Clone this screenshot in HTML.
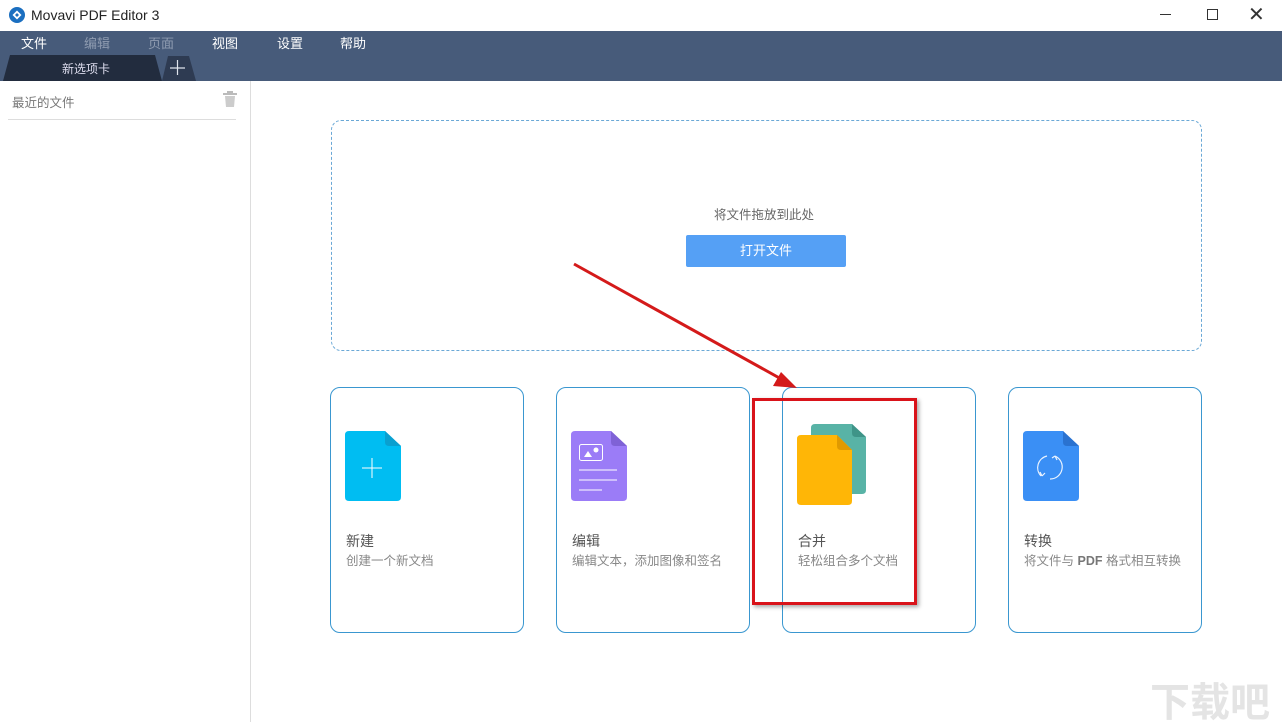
<!DOCTYPE html>
<html><head><meta charset="utf-8"><style>
*{margin:0;padding:0;box-sizing:border-box}
body{width:1282px;height:722px;position:relative;overflow:hidden;background:#fff;font-family:"Liberation Sans","Noto Sans CJK SC",sans-serif;color:#333}
.abs{position:absolute}
.title{top:0;left:0;width:1282px;height:31px;background:#fff;font-size:14px}
.menu{top:31px;left:0;width:1282px;height:50px;background:#475b7a}
.menu span{position:absolute;top:2px;font-size:13px;color:#fff}
.card{position:absolute;top:387px;width:194px;height:246px;border:1px solid #3a97d0;border-radius:10px;background:#fff}
.card .t{position:absolute;left:15px;top:143px;font-size:14px;color:#555}
.card .s{position:absolute;left:15px;top:162px;font-size:12.5px;color:#888;white-space:nowrap}
.card svg{position:absolute;left:14px;top:43px}
</style></head><body>
<div class="abs title">
<svg class="abs" style="left:9px;top:7px" width="16" height="16" viewBox="0 0 16 16"><circle cx="8" cy="8" r="8" fill="#1b6fc0"/><path d="M8 3.5L12.5 8 8 12.5 3.5 8Z" fill="#fff"/><path d="M8 6L10 8 8 10 6 8Z" fill="#1b6fc0"/></svg>
<span class="abs" style="left:31px;top:7px;color:#222">Movavi PDF Editor 3</span>
<span class="abs" style="left:1160px;top:14px;width:11px;height:1px;background:#333"></span>
<span class="abs" style="left:1207px;top:9px;width:11px;height:11px;border:1px solid #333"></span>
<span class="abs" style="left:1248px;top:2px;font-size:20px;color:#333">✕</span>
</div>
<div class="abs menu">
<span style="left:21px">文件</span><span style="left:84px;color:#8e9bb0">编辑</span><span style="left:148px;color:#8e9bb0">页面</span><span style="left:212px">视图</span><span style="left:277px">设置</span><span style="left:340px">帮助</span>
<svg class="abs" style="left:0;top:23px" width="200" height="27"><path d="M3 27L10 1H155L162 27Z" fill="#222c3e"/><path d="M162 27L168 2H189L196 27Z" fill="#2e3b52"/><path d="M170 14H185M177.5 6V21" stroke="#dfe4ec" stroke-width="1.2"/></svg>
<span style="left:62px;top:29px;font-size:12px;color:#dde">新选项卡</span>
</div>
<div class="abs" style="left:0;top:81px;width:251px;height:641px;border-right:1px solid #ddd"></div>
<span class="abs" style="left:12px;top:92px;font-size:12.5px;color:#777">最近的文件</span>
<svg class="abs" style="left:222px;top:91px" width="16" height="16"><rect x="1" y="2" width="14" height="2" fill="#bbb"/><rect x="5" y="0" width="6" height="2" fill="#bbb"/><path d="M3 5H13L12 16H4Z" fill="#ccc"/></svg>
<div class="abs" style="left:8px;top:119px;width:228px;height:1px;background:#ddd"></div>
<div class="abs" style="left:331px;top:120px;width:871px;height:231px;border:1.5px dashed #6aa8d6;border-radius:10px"></div>
<span class="abs" style="left:714px;top:204px;font-size:12.5px;color:#666">将文件拖放到此处</span>
<div class="abs" style="left:686px;top:235px;width:160px;height:32px;background:#55a0f5;border-radius:2px;color:#fff;font-size:13px;text-align:center;line-height:32px">打开文件</div>
<div class="card" style="left:330px"><svg width="58" height="72" viewBox="0 0 58 72"><path d="M4 0H40L56 15V66Q56 70 52 70H4Q0 70 0 66V4Q0 0 4 0Z" fill="#00bdf2"/><path d="M40 0L56 15H44Q40 15 40 11Z" fill="#0aa0d0"/><path d="M17 37H37M27 27V47" stroke="#fff" stroke-width="1"/></svg><div class="t">新建</div><div class="s">创建一个新文档</div></div>
<div class="card" style="left:556px"><svg width="58" height="72" viewBox="0 0 58 72"><path d="M4 0H40L56 15V66Q56 70 52 70H4Q0 70 0 66V4Q0 0 4 0Z" fill="#9b7cf7"/><path d="M40 0L56 15H44Q40 15 40 11Z" fill="#7f62d6"/><rect x="8.5" y="13.5" width="23" height="16" rx="2" fill="none" stroke="#fff"/><path d="M13 26L17 20 21 26Z" fill="#fff"/><circle cx="25" cy="19" r="2.5" fill="#fff"/><path d="M8 39H46M8 49H46M8 59H31" stroke="#fff"/></svg><div class="t">编辑</div><div class="s">编辑文本，添加图像和签名</div></div>
<div class="card" style="left:782px"><svg style="left:14px;top:36px" width="72" height="84" viewBox="0 0 72 84"><path d="M18 0H55L69 13V66Q69 70 65 70H18Q14 70 14 66V4Q14 0 18 0Z" fill="#58b3a6"/><path d="M55 0L69 13H59Q55 13 55 9Z" fill="#3f9488"/><path d="M4 11H40L55 26V77Q55 81 51 81H4Q0 81 0 77V15Q0 11 4 11Z" fill="#ffb606"/><path d="M40 11L55 26H44Q40 26 40 22Z" fill="#e09a00"/></svg><div class="t">合并</div><div class="s">轻松组合多个文档</div></div>
<div class="card" style="left:1008px"><svg width="58" height="72" viewBox="0 0 58 72"><path d="M4 0H40L56 15V66Q56 70 52 70H4Q0 70 0 66V4Q0 0 4 0Z" fill="#3a8ff5"/><path d="M40 0L56 15H44Q40 15 40 11Z" fill="#2a72d0"/><path d="M24 25A12 12 0 0 0 18 45M32 25A12 12 0 0 1 27 48M19 45L17 41M19 45L22 42M32 25L34 29M32 25L29 27" fill="none" stroke="#eaf3ff" stroke-width="1.2"/></svg><div class="t">转换</div><div class="s">将文件与 <b style="color:#777">PDF</b> 格式相互转换</div></div>
<div class="abs" style="left:752px;top:398px;width:165px;height:207px;border:3px solid #d9131a;box-shadow:2px 2px 4px rgba(0,0,0,.35)"></div>
<svg class="abs" style="left:0;top:0" width="1282" height="722"><path d="M574 264L783 380" stroke="#d41a1a" stroke-width="3"/><path d="M797 388L773 386 781 372Z" fill="#d41a1a"/></svg>
<span class="abs" style="left:1150px;top:670px;font-size:40px;color:#e4e4e4;font-weight:bold">下载吧</span>
</body></html>
